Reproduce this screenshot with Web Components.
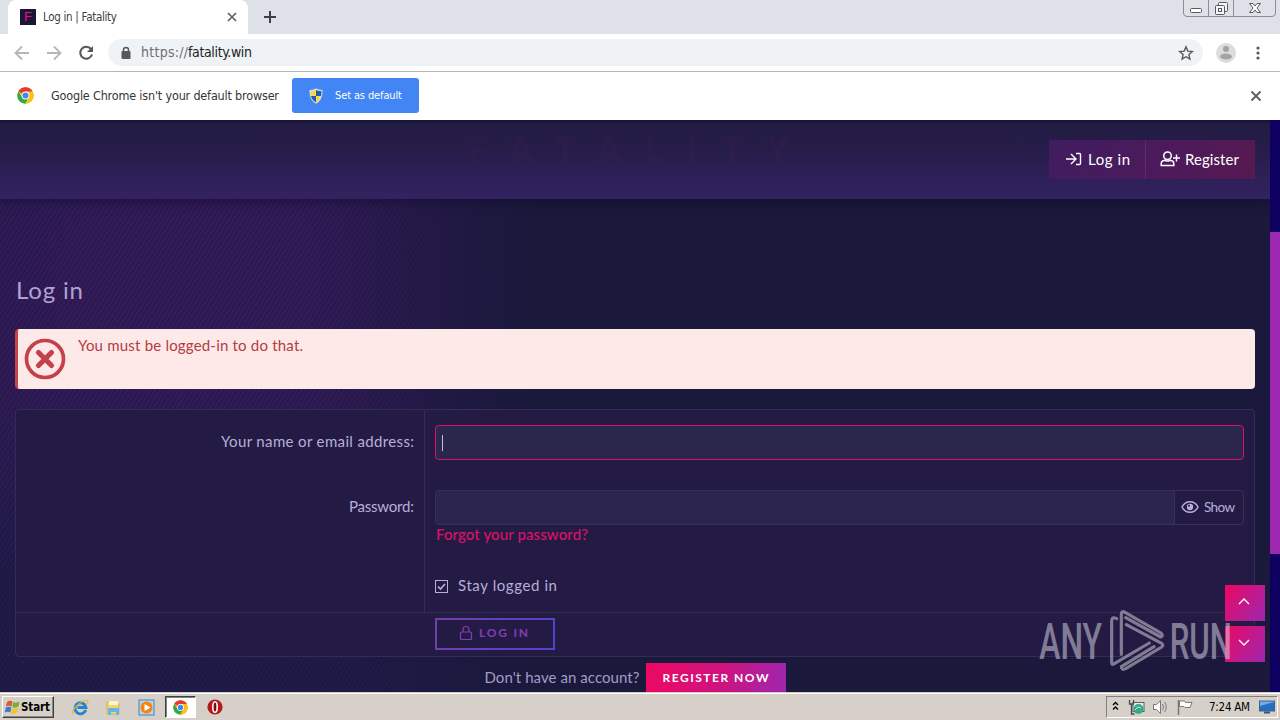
<!DOCTYPE html>
<html lang="en">
<head>
<meta charset="utf-8">
<title>Log in | Fatality</title>
<style>
    body { margin: 0; width: 1280px; height: 720px; overflow: hidden; font-family: Lato, sans-serif; }
</style>
</head>
<body>
<desktop-screen></desktop-screen>

<script>
function attach(el, html) {
    el.attachShadow({ mode: 'open' });
    el.shadowRoot.innerHTML = html;
}

// Chrome logo, shared by the info bar and the taskbar
const chromeLogo = `
    <svg width="17" height="17" viewBox="0 0 48 48">
        <circle cx="24" cy="24" r="23" fill="#fbc116"/>
        <path d="M24 24 4 12.500A23 23 0 0 1 44 12.500Z" fill="#e33b2e"/>
        <path d="M4 12.500A23 23 0 0 0 23 47L34 29 24 24 14 29Z" fill="#2da94f"/>
        <path d="M24 13H44.300A23 23 0 0 1 23 47L34 29Z" fill="#fbc116"/>
        <circle cx="24" cy="24" r="11" fill="#fff"/>
        <circle cx="24" cy="24" r="8.500" fill="#4285f4"/>
    </svg>`;

// One line of text tracked out to the width in its w attribute
class FitText extends HTMLElement {
    constructor() {
        super();
        attach(this, `
            <style>
                :host { display: block; white-space: nowrap; flex: none; }
                span { display: inline-block; }
            </style>
            <span><slot></slot></span>
        `);
    }

    connectedCallback() {
        const width = Number(this.getAttribute('w'));
        const span = this.shadowRoot.querySelector('span');
        const count = this.textContent.length;
        this.style.width = width + 'px';
        span.style.letterSpacing = '0px';
        const natural = span.getBoundingClientRect().width;
        span.style.letterSpacing = ((width - natural) / (count - 1)) + 'px';
    }
}

class TabStrip extends HTMLElement {
    constructor() {
        super();
        attach(this, `
            <style>
                :host { display: flex; height: 34px; background: #dee1e7; font: 11.5px/34px "DejaVu Sans Condensed", "DejaVu Sans", sans-serif; color: #3c4043; }
                .tab { display: flex; align-items: center; width: 240px; margin-left: 8px; background: #fff; border-radius: 8px 8px 0 0; box-sizing: border-box; padding-left: 12px; }
                .fav { width: 16px; height: 16px; background: #1b1638; color: #e3107c; font: 13px/16px "Liberation Sans", sans-serif; text-align: center; margin-right: 7px; }
                .close { margin-left: 109px; }
                .plus { margin: 10px 0 0 15px; }
                .win { display: flex; margin: -1px 4px 0 auto; height: 16px; width: 91px; border: 1px solid #8a8e96; border-radius: 0 0 4px 4px; }
                .win div { width: 25px; border-right: 1px solid #8a8e96; box-sizing: border-box; display: flex; justify-content: center; }
                .win div:last-child { width: 41px; border: 0; }
            </style>
            <div class="tab">
                <div class="fav">F</div>
                <fit-text w="74">Log in | Fatality</fit-text>
                <svg class="close" width="12" height="12"><path d="M2 2l8 8M10 2l-8 8" stroke="#5f6368" stroke-width="1.700"/></svg>
            </div>
            <svg class="plus" width="14" height="14"><path d="M7 1v12M1 7h12" stroke="#3c4043" stroke-width="2"/></svg>
            <div class="win">
                <div><svg width="25" height="16"><rect x="6.500" y="8.500" width="11" height="4" rx="1" fill="#fff" stroke="#555a62"/></svg></div>
                <div><svg width="25" height="16" fill="#f4f5f7" stroke="#555a62"><rect x="9.500" y="2.500" width="9" height="9" rx="1"/><rect x="6.500" y="5.500" width="9" height="9" rx="1"/><rect x="9.500" y="8.500" width="3" height="3"/></svg></div>
                <div><svg width="40" height="16"><path d="M14.500 3.500h3.500l2 2.500 2-2.500h3.500l-3.500 4.500 3.500 4.500h-3.500l-2-2.500-2 2.500h-3.500l3.500-4.500z" fill="#fff" stroke="#555a62"/></svg></div>
            </div>
        `);
    }
}

class AddressBar extends HTMLElement {
    constructor() {
        super();
        attach(this, `
            <style>
                :host { display: flex; align-items: center; height: 38px; box-sizing: border-box; border-bottom: 1px solid #b6b7b9; background: #fff; padding-left: 14px; }
                svg { flex: none; }
                .nav { display: flex; gap: 16px; width: 94px; }
                .field { display: flex; align-items: center; width: 1095px; height: 27px; border-radius: 14px; background: #f0f3f5; box-sizing: border-box; padding: 0 9px 0 11px; font: 14px/27px "DejaVu Sans Condensed", "DejaVu Sans", sans-serif; color: #202124; }
                .lock { margin-right: 8px; }
                .scheme { color: #6a6f75; }
                .star { margin-left: auto; }
                .user { margin-left: 13px; }
                .dots { margin-left: 18px; }
            </style>
            <div class="nav">
                <svg width="16" height="16" fill="none" stroke="#b4b6b9" stroke-width="1.800"><path d="M15 8H2M8 1.500 1.500 8 8 14.500"/></svg>
                <svg width="16" height="16" fill="none" stroke="#b4b6b9" stroke-width="1.800"><path d="M1 8h13M8 1.500 14.500 8 8 14.500"/></svg>
                <svg width="16" height="16" fill="none" stroke="#55585c" stroke-width="2.100"><path d="M13 4A6 6 0 1 0 14 9.500"/><path d="M15 1v6H9z" fill="#55585c" stroke="none"/></svg>
            </div>
            <div class="field">
                <svg class="lock" width="14" height="14"><rect x="2.500" y="5" width="9" height="8" rx="1" fill="#55585c"/><path d="M4.500 6V4a2.500 2.500 0 0 1 5 0v2" fill="none" stroke="#55585c" stroke-width="1.500"/></svg>
                <fit-text w="47" class="scheme">https://</fit-text>
                <fit-text w="64">fatality.win</fit-text>
                <svg class="star" width="16" height="16"><path d="M8 1.800l1.800 4.300 4.600.4-3.500 3.100 1 4.500L8 11.700l-3.900 2.400 1-4.500-3.500-3.100 4.600-.4z" fill="none" stroke="#55585c" stroke-width="1.400"/></svg>
            </div>
            <svg class="user" width="20" height="20"><circle cx="10" cy="10" r="10" fill="#dcdcdc"/><circle cx="10" cy="6" r="3" fill="#a3a3a3"/><ellipse cx="10" cy="13.500" rx="6" ry="3" fill="#a3a3a3"/></svg>
            <svg class="dots" width="8" height="16" fill="#55585c"><circle cx="4" cy="3" r="1.600"/><circle cx="4" cy="8" r="1.600"/><circle cx="4" cy="13" r="1.600"/></svg>
        `);
    }
}

class InfoBar extends HTMLElement {
    constructor() {
        super();
        attach(this, `
            <style>
                :host { display: flex; align-items: center; height: 48px; background: #fff; padding: 0 0 1px 17px; box-sizing: border-box; font: 12.5px/20px "DejaVu Sans Condensed", "DejaVu Sans", sans-serif; color: #333638; }
                .text { margin: 0 13px 0 17px; }
                .button { display: flex; align-items: center; width: 127px; height: 35px; background: #4285f4; border-radius: 3px; color: #fff; font-size: 11px; box-sizing: border-box; padding-left: 17px; }
                .button svg { margin-right: 12px; }
                .close { margin: 0 18px 0 auto; }
            </style>
            ${chromeLogo}
            <fit-text class="text" w="228">Google Chrome isn't your default browser</fit-text>
            <div class="button">
                <svg width="14" height="16"><path d="M7 1c2 1.500 4 1.500 6 1.500C13 9 11 13 7 15 3 13 1 9 1 2.500 3 2.500 5 2.500 7 1z" fill="#f5d94a" stroke="#d5dbe2" stroke-width="1.200"/><path d="M2 8h5v6.300C4.500 13 2.600 11 2 8zM7 2c1.500 1 3 1 5.400 1.200C12.400 5 12.300 6 12 8H7z" fill="#1f5fae"/></svg>
                <fit-text w="67">Set as default</fit-text>
            </div>
            <svg class="close" width="12" height="12"><path d="M1.500 1.500l9 9M10.500 1.500l-9 9" stroke="#606367" stroke-width="2"/></svg>
        `);
    }
}

class SiteHeader extends HTMLElement {
    constructor() {
        super();
        attach(this, `
            <style>
                :host { display: flex; justify-content: space-between; height: 79px; box-sizing: border-box; padding: 20px 15px 0 468px; background: linear-gradient(#17132f 0, #221c43 4px, #261c49 35%, #2c1f56 65%, #332260); box-shadow: 0 2px 10px rgba(15, 10, 40, .6); }
                .logo { height: 24px; color: #3c1f52; opacity: .3; font: bold 32px/24px Lato, sans-serif; margin-top: -3px; }
                .group { display: flex; width: 206px; height: 39px; background: linear-gradient(120deg, #401d60, #4c1a5c 55%, #571950); color: #fff; font-size: 15px; line-height: 37px; }
                .item { display: flex; align-items: center; box-sizing: border-box; }
                .login { width: 97px; padding-left: 16px; border-right: 1px solid #622d69; }
                .register { padding-left: 14px; }
                .login svg { margin-right: 6px; }
                .register svg { margin-right: 5px; }
            </style>
            <fit-text class="logo" w="320">FATALITY</fit-text>
            <div class="group">
                <div class="item login">
                    <svg width="17" height="16" fill="none" stroke="#fff" stroke-width="1.400"><path d="M1 7h10M6 2l5 5-5 5M11 1.500h3.500a1 1 0 0 1 1 1v9a1 1 0 0 1-1 1H11"/></svg>
                    <fit-text w="42">Log in</fit-text>
                </div>
                <div class="item register">
                    <svg width="20" height="18" fill="none" stroke="#fff" stroke-width="1.500"><circle cx="7.500" cy="4.800" r="3.800"/><path d="M5 9.300c-2.500.3-3.800 1.500-3.800 3.500v1.700h12.600v-1.700c0-2-1.300-3.200-3.800-3.500-1.700 1-3.300 1-5 0zM13 7h7M16.500 3.500v7"/></svg>
                    <fit-text w="54">Register</fit-text>
                </div>
            </div>
        `);
    }
}

class ErrorNotice extends HTMLElement {
    constructor() {
        super();
        attach(this, `
            <style>
                :host { display: flex; height: 60px; box-sizing: border-box; border-left: 3px solid #c84448; border-radius: 4px; background: #fee9e9; color: #b33c43; font-size: 15px; line-height: 20px; padding: 6px; }
                svg { margin: 3px 12px 0 0; }
            </style>
            <svg width="42" height="42" viewBox="0 0 42 42" fill="none" stroke="#c44149">
                <circle cx="21" cy="21" r="18.500" stroke-width="3.700"/>
                <path d="M14.500 14.500l13 13M27.500 14.500l-13 13" stroke-width="5.200" stroke-linecap="round"/>
            </svg>
            <slot></slot>
        `);
    }
}

class FormRow extends HTMLElement {
    constructor() {
        super();
        attach(this, `
            <style>
                :host { display: grid; grid-template-columns: 409px 1fr; }
                .label { border-right: 1px solid #322c57; padding: 0 10px 0 0; display: flex; justify-content: flex-end; }
                .field { padding: 0 10px; }
            </style>
            <div class="label"><slot name="label"></slot></div>
            <div class="field"><slot></slot></div>
        `);
    }
}

class LoginForm extends HTMLElement {
    constructor() {
        super();
        attach(this, `
            <style>
                :host { display: block; height: 248px; box-sizing: border-box; border: 1px solid #322c57; border-radius: 4px; background: #231b44; color: #b9aed9; font-size: 15px; line-height: 20px; }
                .name { height: 65px; }
                .password { height: 96px; }
                .stay { height: 41px; }
                .label { padding-top: 21px; }
                .input { height: 35px; margin-top: 15px; box-sizing: border-box; border: 1px solid #dc0f6a; border-radius: 4px; background: #2b274c; padding: 9px 6px; }
                .caret { width: 1px; height: 16px; background: #c5bce0; }
                .secret { display: flex; height: 35px; margin-top: 15px; box-sizing: border-box; border: 1px solid #373059; border-radius: 4px; background: #2c254d; }
                .show { display: flex; align-items: center; margin-left: auto; width: 69px; background: #231b44; border-left: 1px solid #373059; border-radius: 0 4px 4px 0; font-size: 13.5px; line-height: 18px; box-sizing: border-box; padding: 0 0 1px 6px; }
                .show svg { margin-right: 5px; }
                .forgot { color: #da1267; font-weight: 500; padding-left: 1px; margin-top: -1px; }
                .check { display: flex; align-items: center; height: 20px; padding-top: 4px; }
                .check svg { margin: 2px 10px 0 0; }
                .submit { border-top: 1px solid #322c57; padding: 5px 0 0 419px; }
                .button { display: flex; align-items: center; width: 120px; height: 32px; box-sizing: border-box; border: 2px solid; border-image: linear-gradient(110deg, #743da9, #5243d0) 1; color: #853cb9; font-size: 12px; font-weight: 700; padding: 0 0 2px 22px; }
                .button svg { margin-right: 6px; }
            </style>
            <form-row class="name">
                <fit-text slot="label" class="label" w="193">Your name or email address:</fit-text>
                <div class="input"><div class="caret"></div></div>
            </form-row>
            <form-row class="password">
                <fit-text slot="label" class="label" w="65">Password:</fit-text>
                <div class="secret">
                    <div class="show">
                        <svg width="18" height="14" fill="none" stroke="#b9aed9" stroke-width="1.500"><path d="M1 7c3.500-7 12.500-7 16 0-3.500 7-12.500 7-16 0z"/><circle cx="9" cy="7" r="3.200" fill="#b9aed9" stroke="none"/><circle cx="8" cy="5.700" r="1" fill="#231b44" stroke="none"/></svg>
                        <fit-text w="31">Show</fit-text>
                    </div>
                </div>
                <fit-text class="forgot" w="152">Forgot your password?</fit-text>
            </form-row>
            <form-row class="stay">
                <div class="check">
                    <svg width="13" height="13" fill="none" stroke="#b9aed9"><rect x=".5" y=".5" width="12" height="12"/><path d="M3 6.500l2.500 2.500 4.500-5" stroke-width="1.700"/></svg>
                    <fit-text w="99">Stay logged in</fit-text>
                </div>
            </form-row>
            <div class="submit">
                <div class="button">
                    <svg width="14" height="16" fill="none" stroke="#853cb9" stroke-width="1.200"><rect x="1.500" y="7" width="11" height="7.500" rx="1"/><path d="M4 7V4.500a3 3 0 0 1 6 0V7"/></svg>
                    <fit-text w="49">LOG IN</fit-text>
                </div>
            </div>
        `);
    }
}

class ScrollButtons extends HTMLElement {
    constructor() {
        super();
        attach(this, `
            <style>
                :host { display: flex; flex-direction: column; gap: 5px; }
                div { display: flex; align-items: center; justify-content: center; width: 40px; height: 36px; background: linear-gradient(125deg, #ed0862, #9c27b0); }
            </style>
            <div><svg width="14" height="10" fill="none" stroke="#fff" stroke-width="1.300"><path d="M1 6l5-5 5 5"/></svg></div>
            <div><svg width="14" height="10" fill="none" stroke="#fff" stroke-width="1.300"><path d="M1 1l5 5 5-5"/></svg></div>
        `);
    }
}

class WaterMark extends HTMLElement {
    constructor() {
        super();
        attach(this, `
            <style>
                :host { display: block; opacity: .5; }
                svg { display: block; overflow: visible; }
                text { font: 500 152px Roboto, sans-serif; fill: #dedbe6; }
            </style>
            <svg width="204" height="66" viewBox="54 414 612 198">
                <text x="58" y="567" textLength="188" lengthAdjust="spacingAndGlyphs">ANY</text>
                <text x="449" y="567" textLength="187" lengthAdjust="spacingAndGlyphs">RUN</text>
                <g fill="none" stroke="#dedbe6" stroke-width="9.500" stroke-linecap="round" stroke-linejoin="round">
                    <path d="M290 446q-15-8-15 8V578q0 8 8 3L388 519"/>
                    <path d="M304 553V434q0-13 11-7L423 489q8 8-1 12L317 443"/>
                    <path d="M319 464L425 520q7 6 0 11L317 596q-12 6-13-6L402 530"/>
                </g>
            </svg>
        `);
    }
}

class WebPage extends HTMLElement {
    constructor() {
        super();
        attach(this, `
            <style>
                :host { display: flex; position: relative; height: 572px; overflow: hidden; background: #1a183b; }
                .view {
                    width: 1270px; flex: none;
                    background:
                        linear-gradient(90deg, transparent 320px, #1a183b 540px),
                        repeating-linear-gradient(122deg, rgba(20, 8, 40, .24) 0 1.500px, transparent 1.500px 4px),
                        radial-gradient(ellipse 400px 330px at 190px 160px, #341c5b 0, rgba(50, 28, 88, .8) 60%, transparent 100%),
                        #201c4a;
                }
                .content { padding: 76px 15px 0; }
                .title { color: #b1a1d4; font-size: 24px; line-height: 30px; margin-bottom: 24px; padding-left: 1px; }
                login-form { margin-top: 20px; }
                .join { display: flex; align-items: flex-start; justify-content: center; margin-top: 6px; color: #a49bc8; font-size: 15px; line-height: 29px; }
                .register { display: flex; width: 140px; height: 36px; margin-left: 6px; justify-content: center; background: linear-gradient(100deg, #ed0862, #ce1380 55%, #9c27b0); color: #fff; font-size: 12px; font-weight: 700; line-height: 30px; }
                .thumb { height: 322px; margin-top: 112px; background: #9c27b0; }
                .trough { width: 10px; background: #0d0060; }
                scroll-buttons { position: absolute; left: 1225px; top: 465px; }
                water-mark { position: absolute; left: 1038px; top: 488px; }
            </style>
            <div class="view">
                <site-header></site-header>
                <div class="content">
                    <fit-text class="title" w="67">Log in</fit-text>
                    <error-notice><fit-text w="225">You must be logged-in to do that.</fit-text></error-notice>
                    <login-form></login-form>
                    <div class="join">
                        <fit-text w="155">Don't have an account?</fit-text>
                        <div class="register"><fit-text w="106">REGISTER NOW</fit-text></div>
                    </div>
                </div>
            </div>
            <div class="trough"><div class="thumb"></div></div>
            <scroll-buttons></scroll-buttons>
            <water-mark></water-mark>
        `);
    }
}

class TaskBar extends HTMLElement {
    constructor() {
        super();
        attach(this, `
            <style>
                :host { display: flex; align-items: center; height: 28px; box-sizing: border-box; border-top: 1px solid #d4d0c8; background: #d6d0c8; box-shadow: inset 0 1px #fff; padding: 1px 2px 0; font: 11.5px/14px "DejaVu Sans Condensed", "DejaVu Sans", sans-serif; color: #000; }
                svg { flex: none; }
                .start { display: flex; align-items: center; width: 52px; height: 22px; box-sizing: border-box; border: 1px solid; border-color: #fff #404040 #404040 #fff; box-shadow: inset -1px -1px #8b8880; font-size: 11.5px; font-weight: bold; padding-left: 2px; }
                .icons { display: flex; align-items: center; margin-left: 18px; }
                .icons > svg { margin-right: 16px; }
                .active { display: flex; align-items: center; justify-content: center; width: 31px; height: 22px; box-sizing: border-box; background: #fff; border: 1px solid; border-color: #404040 #fff #fff #404040; box-shadow: inset 1px 1px #808080; margin: 0 11px 0 -6px; }
                .active svg { width: 15px; height: 15px; }
                .tray { display: flex; align-items: center; margin-left: auto; width: 172px; height: 22px; box-sizing: border-box; border: 1px solid; border-color: #808080 #fff #fff #808080; padding-left: 4px; }
                .tray svg { margin-right: 7px; }
                .clock { margin: 0 9px 0 8px; }
            </style>
            <div class="start">
                <svg width="16" height="16"><path d="M2 3q3-2 5.500-.5L6.500 7.500Q4 6 1 7.500z" fill="#e3572b"/><path d="M8.300 3Q11 4.500 14.500 2.500L13.500 7.500Q10 9.500 7.300 8z" fill="#70b336"/><path d="M.8 8.500q3-1.500 5.500 0l-1 5Q3 12-.2 13.500z" fill="#3c79cf"/><path d="M7 9q3 1.500 6.300-.5l-1 5Q9 15.500 6 14z" fill="#f4c22c"/></svg>
                <fit-text w="29">Start</fit-text>
            </div>
            <div class="icons">
                <svg width="17" height="17"><path d="M13.800 11A5.500 5.500 0 1 1 14 8.500H5.500" fill="none" stroke="#2583d3" stroke-width="2.800"/><path d="M1 15C-1 11 9 1 15 1.500c2 .4.5 3-1 4.500" fill="none" stroke="#e9b52d" stroke-width="1.200"/></svg>
                <svg width="17" height="17"><path d="M2 3h5l1 2h6v10H2z" fill="#f0d675" stroke="#cfad4b" stroke-width=".8"/><path d="M4 2h9v4H4z" fill="#fff5c0"/><path d="M3 9h11v7h-3v-3H6v3H3z" fill="#64b8e3"/></svg>
                <svg width="17" height="17"><rect x="1" y="1" width="15" height="15" fill="#b6d5ee" stroke="#4983b8"/><circle cx="8.500" cy="8.500" r="6" fill="#f58513"/><path d="M6.500 5l6 3.500-6 3.500z" fill="#fff"/></svg>
                <div class="active">${chromeLogo}</div>
                <svg width="16" height="16"><circle cx="8" cy="8" r="7.600" fill="#b8171b"/><ellipse cx="8" cy="8" rx="2.200" ry="5.300" fill="#731012" stroke="#fff" stroke-width="1.600"/></svg>
            </div>
            <div class="tray">
                <svg width="10" height="12" fill="none" stroke="#000" stroke-width="1.400"><path d="M2 4l2.500-2.500L7 4M2 8.500L4.500 6 7 8.500"/></svg>
                <svg width="17" height="17"><rect x="5" y="3.500" width="11" height="9" fill="#e4f0ee" stroke="#59625f"/><circle cx="10.500" cy="10" r="5" fill="#3ba889"/><path d="M7 11l3-3 3 1" stroke="#b7eadb" fill="none"/><path d="M1.500 1v4h4V1M3.500 5v10h3" fill="none" stroke="#474b4d" stroke-width="1.300"/></svg>
                <svg width="17" height="16" fill="none" stroke="#77777a"><path d="M1.500 5.500h3l4-4v13l-4-4h-3z" fill="#fff"/><path d="M10.500 5q2 3 0 6M12.500 3q3.500 5 0 10"/></svg>
                <svg width="18" height="16"><path d="M2.500 1v15" stroke="#777" stroke-width="1.500"/><path d="M3.500 2h5l1 1.500 6.500 0-2 5H9l-1-1H3.500z" fill="#fff" stroke="#777"/></svg>
                <fit-text class="clock" w="41">7:24 AM</fit-text>
                <svg width="16" height="14"><rect x=".5" y="1" width="15" height="10" fill="#226fc6" stroke="#4c6078"/><path d="M1 6L15 2v-.5H1z" fill="#6eafe9"/><path d="M5 12.500h6" stroke="#415570" stroke-width="2"/></svg>
            </div>
        `);
    }
}

class DesktopScreen extends HTMLElement {
    constructor() {
        super();
        attach(this, `
            <style>
                :host { display: block; width: 1280px; height: 720px; overflow: hidden; }
            </style>
            <tab-strip></tab-strip>
            <address-bar></address-bar>
            <info-bar></info-bar>
            <web-page></web-page>
            <task-bar></task-bar>
        `);
    }
}

customElements.define('fit-text', FitText);
customElements.define('tab-strip', TabStrip);
customElements.define('address-bar', AddressBar);
customElements.define('info-bar', InfoBar);
customElements.define('site-header', SiteHeader);
customElements.define('error-notice', ErrorNotice);
customElements.define('form-row', FormRow);
customElements.define('login-form', LoginForm);
customElements.define('scroll-buttons', ScrollButtons);
customElements.define('water-mark', WaterMark);
customElements.define('web-page', WebPage);
customElements.define('task-bar', TaskBar);
customElements.define('desktop-screen', DesktopScreen);
</script>
</body>
</html>
